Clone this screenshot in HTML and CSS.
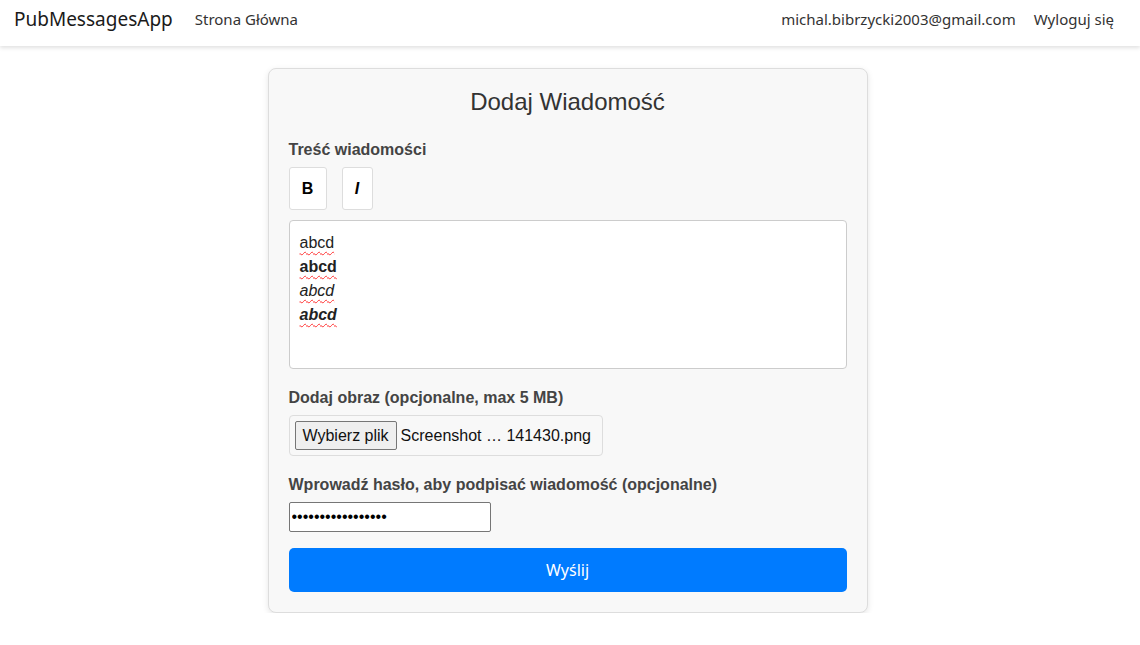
FILE: index.html
```html
<!DOCTYPE html>
<html lang="pl">
<head>
<meta charset="utf-8">
<title>PubMessagesApp</title>
<link rel="stylesheet" href="styles.css">
</head>
<body>
<nav class="navbar">
  <div class="nav-left">
    <span class="brand">PubMessagesApp</span>
    <span class="nav-link">Strona Główna</span>
  </div>
  <div class="nav-right">
    <span class="nav-link">michal.bibrzycki2003@gmail.com</span>
    <span class="nav-link">Wyloguj się</span>
  </div>
</nav>
<main class="page">
  <div class="card">
    <h2 class="title">Dodaj Wiadomość</h2>
    <label class="label">Treść wiadomości</label>
    <div class="toolbar">
      <button class="tool tool-b">B</button>
      <button class="tool tool-i">I</button>
    </div>
    <div class="editor">
      <div><span class="sp">abcd</span></div>
      <div><b class="sp">abcd</b></div>
      <div><i class="sp">abcd</i></div>
      <div><b><i class="sp">abcd</i></b></div>
    </div>
    <label class="label label-gap">Dodaj obraz (opcjonalne, max 5 MB)</label>
    <div class="filebox">
      <span class="file-btn">Wybierz plik</span>
      <span class="file-name">Screenshot … 141430.png</span>
    </div>
    <label class="label label-gap">Wprowadź hasło, aby podpisać wiadomość (opcjonalne)</label>
    <input class="password" type="password" value="aaaaaaaaaaaaaaaaa">
    <button class="submit">Wyślij</button>
  </div>
</main>
</body>
</html>
```
FILE: styles.css
```css
* { box-sizing: border-box; }
body {
  margin: 0;
  background: #fff;
  font-family: "Liberation Sans", Arial, sans-serif;
}
.navbar {
  height: 46px;
  display: flex;
  justify-content: space-between;
  align-items: center;
  padding: 0 26px 8px 14px;
  background: #fff;
  box-shadow: 0 2px 4px rgba(0,0,0,0.12);
  font-family: "Noto Sans", "Open Sans", sans-serif;
  color: #222;
}
.nav-left, .nav-right {
  display: flex;
  align-items: center;
}
.brand {
  font-size: 19px;
  margin-right: 22px;
  color: #1a1a1a;
}
.nav-link {
  font-size: 15px;
  color: #333;
}
.nav-right .nav-link + .nav-link { margin-left: 18px; }
.page {
  display: flex;
  justify-content: center;
  padding-top: 22px;
  padding-right: 5px;
}
.card {
  width: 600px;
  background: #f8f8f8;
  border: 1px solid #ddd;
  border-radius: 8px;
  box-shadow: 0 2px 6px rgba(0,0,0,0.1);
  padding: 19px 20px 20px;
  display: flex;
  flex-direction: column;
  align-items: flex-start;
}
.title {
  align-self: stretch;
  text-align: center;
  margin: 0 0 24px;
  font-size: 24px;
  line-height: 28px;
  font-weight: normal;
  color: #333;
}
.label {
  font-size: 16px;
  line-height: 19px;
  font-weight: bold;
  color: #444;
  margin-bottom: 8px;
}
.label-gap { margin-top: 19px; margin-bottom: 8px; }
.toolbar {
  display: flex;
  gap: 15px;
  margin-bottom: 10px;
}
.tool {
  height: 43px;
  background: #fff;
  border: 1px solid #ddd;
  border-radius: 3px;
  font-family: "Liberation Sans", Arial, sans-serif;
  font-size: 16px;
  font-weight: bold;
  color: #000;
  padding: 0;
}
.tool-b { width: 38px; font-weight: 900; }
.tool-i { width: 31px; font-style: italic; }
.editor {
  align-self: stretch;
  height: 149px;
  background: #fff;
  border: 1px solid #ccc;
  border-radius: 4px;
  padding: 10px 10px;
  font-size: 16px;
  line-height: 24px;
  color: #222;
}
.sp {
  text-decoration: underline wavy #ff3333;
  text-decoration-thickness: 1.3px;
  text-underline-offset: 3px;
}
.filebox {
  display: flex;
  align-items: center;
  height: 41px;
  width: 314px;
  padding: 0 5px;
  background: #f8f8f8;
  border: 1px solid #ddd;
  border-radius: 4px;
  font-size: 16px;
  color: #111;
}
.file-btn {
  display: inline-flex;
  align-items: center;
  height: 29px;
  padding: 0 7px;
  background: #efefef;
  border: 1px solid #767676;
  border-radius: 2px;
  margin-right: 4px;
}
.password {
  width: 202px;
  height: 30px;
  border: 1px solid #767676;
  border-radius: 2px;
  padding: 1px 2px;
  font-size: 16px;
  background: #fff;
  margin: 0;
}
.submit {
  align-self: stretch;
  margin-top: 16px;
  height: 44px;
  background: #007bff;
  color: #fff;
  border: none;
  border-radius: 5px;
  font-family: "Noto Sans", "Open Sans", sans-serif;
  font-size: 16px;
}
```
